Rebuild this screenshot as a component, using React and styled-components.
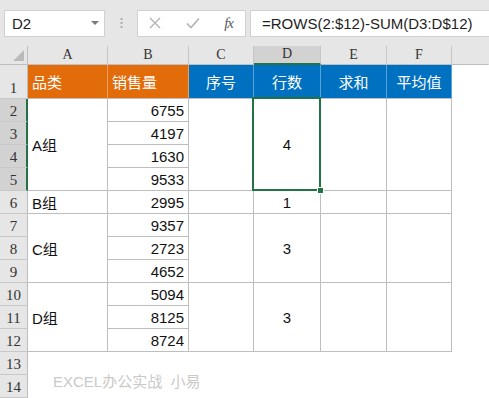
import React from 'react';
import styled, { createGlobalStyle, css } from 'styled-components';

const GREEN = '#217346';
const LINE = '#bebebe';
const HEAD_BG = '#e6e6e6';

const GlobalStyle = createGlobalStyle`
  html, body {
    margin: 0;
    padding: 0;
    background: #fff;
    overflow: hidden;
  }
  body {
    font-family: "Liberation Sans", "Noto Sans CJK SC", sans-serif;
  }
`;

const Page = styled.div`
  width: 489px;
  height: 398px;
  overflow: hidden;
  background: #fff;
`;

/* ---------- formula bar ---------- */

const Toolbar = styled.div`
  height: 46px;
  background: ${HEAD_BG};
  display: flex;
  align-items: center;
  padding-left: 4px;
  box-sizing: border-box;
`;

const Box = styled.div`
  height: 27px;
  background: #fff;
  border: 1px solid #d0d0d0;
  box-sizing: border-box;
  display: flex;
  align-items: center;
`;

const NameBox = styled(Box)`
  width: 101px;
  padding: 0 5px 0 7px;
  justify-content: space-between;
  font-size: 15px;
  color: #222;
`;

const Caret = styled.span`
  width: 0;
  height: 0;
  border-left: 4px solid transparent;
  border-right: 4px solid transparent;
  border-top: 4px solid #7a7a7a;
`;

const Grip = styled.div`
  width: 3px;
  height: 12px;
  margin: 0 14px 0 15px;
  background: radial-gradient(circle, #a9a9a9 1px, transparent 1.2px) 0 0 / 3px 4px repeat-y;
`;

const IconBox = styled(Box)`
  width: 109px;
  padding: 0 12px 0 11px;
  justify-content: space-between;
`;

const Fx = styled.span`
  font-family: "Liberation Serif", serif;
  font-style: italic;
  font-size: 15px;
  color: #5a5a5a;
  letter-spacing: -1px;
`;

const FormulaBox = styled(Box)`
  flex: 1;
  margin-left: 4px;
  margin-right: -2px;
  padding-left: 11px;
  font-size: 15px;
  color: #1e1e1e;
`;

/* ---------- sheet ---------- */

const Sheet = styled.div`
  display: grid;
  grid-template-columns: 28px 80px 81px 65px 67px 66px 65px 1fr;
  grid-template-rows: 19px 34px repeat(13, 23px);
`;

const place = css`
  grid-column: ${p => p.$col} / span ${p => p.$cspan || 1};
  grid-row: ${p => p.$row} / span ${p => p.$span || 1};
  box-sizing: border-box;
  min-width: 0;
`;

const Corner = styled.div`
  ${place};
  background: ${HEAD_BG};
  border-right: 1px solid ${LINE};
  border-bottom: 1px solid ${LINE};
  position: relative;
  &::after {
    content: '';
    position: absolute;
    right: 3px;
    bottom: 3px;
    border-left: 11px solid transparent;
    border-bottom: 11px solid #b9b9b9;
  }
`;

const ColHead = styled.div`
  ${place};
  background: ${p => (p.$active ? '#d2d2d2' : HEAD_BG)};
  border-right: 1px solid ${p => (p.$last ? 'transparent' : '#c6c6c6')};
  border-bottom: ${p => (p.$active ? `2px solid ${GREEN}` : `1px solid ${LINE}`)};
  font-family: "Liberation Serif", serif;
  font-size: 14px;
  color: #333;
  display: flex;
  justify-content: center;
  align-items: flex-end;
  overflow: hidden;
  padding-bottom: 1px;
  line-height: 16px;
`;

const RowHead = styled.div`
  ${place};
  background: ${p => (p.$active ? '#d2d2d2' : HEAD_BG)};
  border-right: ${p => (p.$active ? `2px solid ${GREEN}` : `1px solid ${LINE}`)};
  border-bottom: 1px solid #c8c8c8;
  font-family: "Liberation Serif", serif;
  font-size: 15px;
  color: #333;
  display: flex;
  justify-content: center;
  align-items: flex-end;
  padding-bottom: 1px;
  padding-left: ${p => (p.$active ? '1px' : '0')};
  line-height: 17px;
`;

const Title = styled.div`
  ${place};
  background: ${p => p.$bg};
  border-right: 1px solid rgba(255, 255, 255, 0.35);
  border-bottom: 1px solid ${LINE};
  color: #fff;
  font-size: 15px;
  display: flex;
  align-items: center;
  justify-content: ${p => (p.$center ? 'center' : 'flex-start')};
  padding-left: ${p => (p.$center ? '0' : '4px')};
`;

const Cell = styled.div`
  ${place};
  border-right: 1px solid ${LINE};
  border-bottom: 1px solid ${LINE};
  font-size: 15px;
  color: #111;
  display: flex;
  align-items: center;
  justify-content: ${p => p.$align || 'flex-start'};
  padding: 0 4px;
  position: relative;
  ${p =>
    p.$selected &&
    css`
      z-index: 2;
      &::after {
        content: '';
        position: absolute;
        top: -2px;
        left: -2px;
        right: -1px;
        bottom: -1px;
        border: 2px solid ${GREEN};
        pointer-events: none;
      }
    `}
`;

const Handle = styled.span`
  position: absolute;
  right: -4px;
  bottom: -4px;
  width: 5px;
  height: 5px;
  background: ${GREEN};
  border: 1px solid #fff;
  z-index: 3;
`;

const Watermark = styled.div`
  ${place};
  align-self: end;
  padding: 0 0 6px 25px;
  font-size: 15px;
  color: #c9c9c9;
  white-space: pre;
  line-height: 20px;
`;

const ORANGE = '#e36c0a';
const BLUE = '#0070c0';

const columns = ['A', 'B', 'C', 'D', 'E', 'F', ''];

const titles = [
  { text: '品类', bg: ORANGE },
  { text: '销售量', bg: ORANGE },
  { text: '序号', bg: BLUE, center: true },
  { text: '行数', bg: BLUE, center: true },
  { text: '求和', bg: BLUE, center: true },
  { text: '平均值', bg: BLUE, center: true },
];

const sales = [6755, 4197, 1630, 9533, 2995, 9357, 2723, 4652, 5094, 8125, 8724];

const groups = [
  { from: 2, to: 5, name: 'A组', rows: 4 },
  { from: 6, to: 6, name: 'B组', rows: 1 },
  { from: 7, to: 9, name: 'C组', rows: 3 },
  { from: 10, to: 12, name: 'D组', rows: 3 },
];

const Cross = () => (
  <svg width="12" height="12" viewBox="0 0 12 12">
    <path d="M1 1 L11 11 M11 1 L1 11" stroke="#b3b3b3" strokeWidth="1.4" fill="none" />
  </svg>
);

const Check = () => (
  <svg width="14" height="12" viewBox="0 0 14 12">
    <path d="M1 6.5 L5 10.5 L13 1.5" stroke="#b3b3b3" strokeWidth="1.6" fill="none" />
  </svg>
);

export default function App() {
  const rowNums = Array.from({ length: 14 }, (_, i) => i + 1);
  return (
    <Page>
      <GlobalStyle />
      <Toolbar>
        <NameBox>
          D2
          <Caret />
        </NameBox>
        <Grip />
        <IconBox>
          <Cross />
          <Check />
          <Fx>fx</Fx>
        </IconBox>
        <FormulaBox>=ROWS(2:$12)-SUM(D3:D$12)</FormulaBox>
      </Toolbar>

      <Sheet>
        <Corner $col={1} $row={1} />
        {columns.map((c, i) => (
          <ColHead key={i} $col={i + 2} $row={1} $active={c === 'D'} $last={i === columns.length - 1}>
            {c}
          </ColHead>
        ))}

        {rowNums.map(n => (
          <RowHead key={n} $col={1} $row={n + 1} $active={n >= 2 && n <= 5}>
            {n}
          </RowHead>
        ))}

        {titles.map((t, i) => (
          <Title key={t.text} $col={i + 2} $row={2} $bg={t.bg} $center={t.center}>
            {t.text}
          </Title>
        ))}

        {sales.map((v, i) => (
          <Cell key={i} $col={3} $row={i + 3} $align="flex-end">
            {v}
          </Cell>
        ))}

        {groups.map(g => {
          const span = g.to - g.from + 1;
          const row = g.from + 1;
          const first = g.from === 2;
          return (
            <React.Fragment key={g.name}>
              <Cell $col={2} $row={row} $span={span}>{g.name}</Cell>
              <Cell $col={4} $row={row} $span={span} />
              <Cell $col={5} $row={row} $span={span} $align="center" $selected={first}>
                {g.rows}
                {first && <Handle />}
              </Cell>
              <Cell $col={6} $row={row} $span={span} />
              <Cell $col={7} $row={row} $span={span} />
            </React.Fragment>
          );
        })}

        <Watermark $col={2} $cspan={4} $row={14} $span={2}>EXCEL办公实战  小易</Watermark>
      </Sheet>
    </Page>
  );
}
